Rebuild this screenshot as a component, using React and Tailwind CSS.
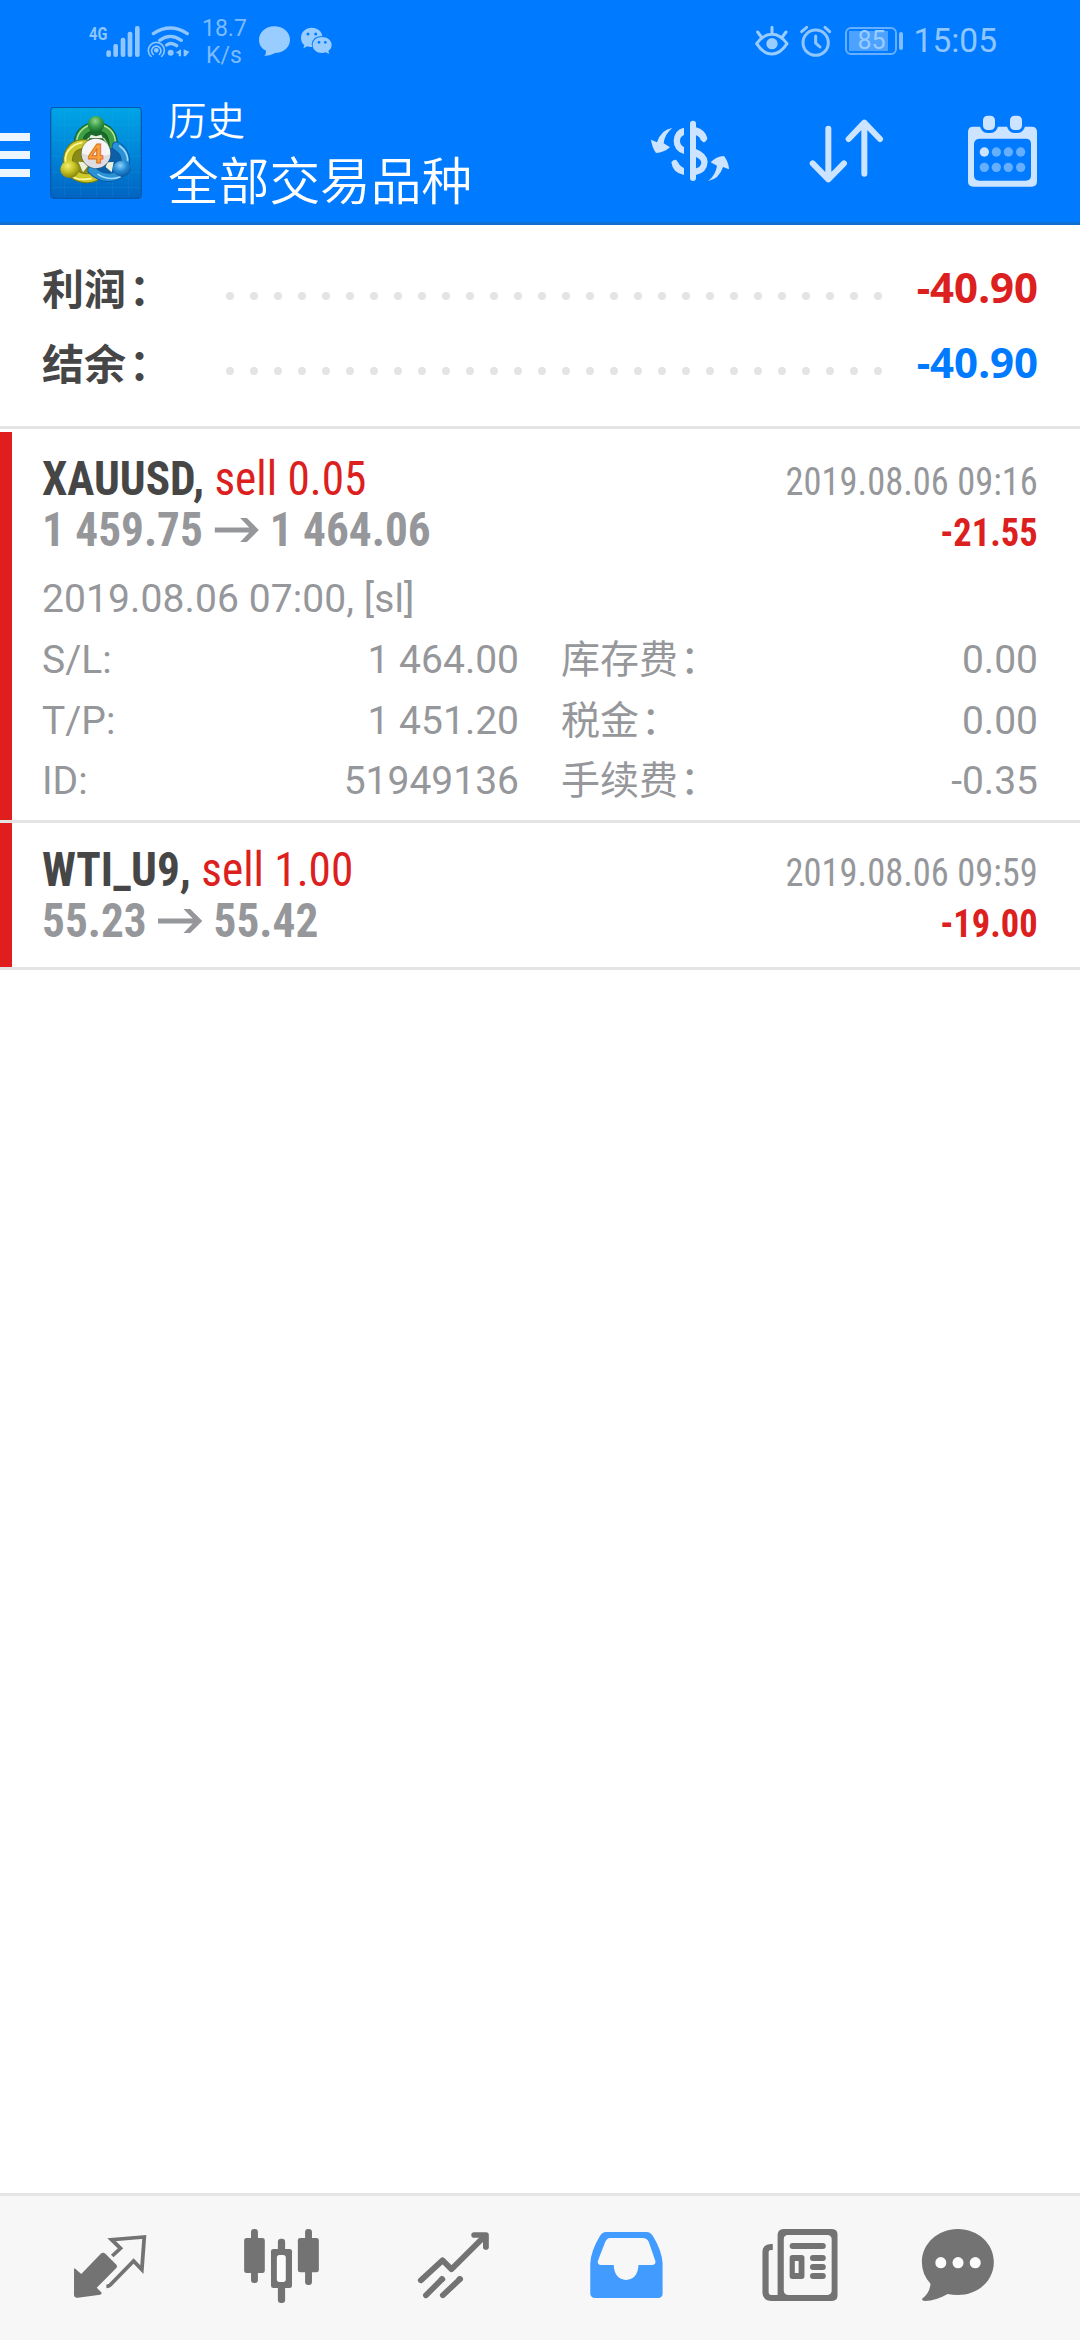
import React from 'react'

const dots = Array.from({ length: 28 })

const SignalIcon = () => (
  <svg className="ml-[27px] h-9 w-[54px] overflow-visible" viewBox="81 64 162 108">
    <text x="87" y="115" fontSize="57" fontWeight="700" fill="#8fc6ff" fontFamily="Roboto" textLength="55" lengthAdjust="spacingAndGlyphs">4G</text>
    <g fill="#8fc6ff">
      <rect x="139" y="146" width="14" height="20" rx="6" />
      <rect x="160" y="127" width="14" height="39" rx="6" />
      <rect x="182" y="108" width="14" height="58" rx="6" />
      <rect x="203" y="90" width="14" height="76" rx="6" />
      <rect x="225" y="73" width="14" height="93" rx="6" />
    </g>
  </svg>
)

const WifiIcon = () => (
  <svg className="ml-[6px] h-8 w-[43px]" viewBox="261 72 129 96">
    <g fill="none" stroke="#8fc6ff" strokeWidth="10" strokeLinecap="round">
      <path d="M280 98Q331 64 382 98" />
      <path d="M299 118Q331 94 364 118" />
      <path d="M320 132Q334 122 350 134" />
      <path d="M273 166A24 24 0 1 1 305 166" strokeWidth="5" />
      <path d="M280 160A14 14 0 1 1 298 160" strokeWidth="5" />
    </g>
    <g fill="#8fc6ff">
      <circle cx="289" cy="148" r="7" />
      <circle cx="332" cy="155" r="9" />
      <path d="M347 155L363 145V166H356V158ZM371 145L388 152L377 166H371Z" />
    </g>
  </svg>
)

const BubbleIcon = () => (
  <svg className="ml-3 h-8 w-[33px]" viewBox="594 75 99 96">
    <path d="M643 79C670 79 690 97 690 119C690 142 670 158 645 159Q634 166 613 168Q619 161 618 152C604 145 597 133 597 119C597 97 617 79 643 79Z" fill="#99ccff" />
  </svg>
)

const WechatIcon = () => (
  <svg className="ml-[9px] h-8 w-[33px]" viewBox="719 75 99 96">
    <path d="M754 83C772 83 785 95 786 108Q757 108 754 133L756 141Q748 142 741 139L729 145L732 135C725 130 722 122 722 113C722 96 736 83 754 83Z" fill="#99ccff" />
    <path d="M785 111C801 111 814 121 814 135C814 143 810 149 804 153L807 162L796 157Q791 159 785 159C769 159 757 149 757 135C757 121 769 111 785 111Z" fill="#99ccff" />
    <g fill="#007aff">
      <circle cx="743" cy="102" r="4.5" />
      <circle cx="766" cy="102" r="4.5" />
      <circle cx="776" cy="127" r="4" />
      <circle cx="795" cy="127" r="4" />
    </g>
  </svg>
)

const EyeIcon = () => (
  <svg className="h-8 w-[36px]" viewBox="68 73 108 96">
    <g fill="none" stroke="#99ccff" strokeWidth="9" strokeLinecap="round" strokeLinejoin="round">
      <path d="M76 129Q96 101 122 101Q147 101 167 129Q147 160 122 160Q96 160 76 129Z" />
      <path d="M122 80V96M79 94L90 109M164 94L153 109" />
    </g>
    <circle cx="122" cy="129" r="17" fill="#99ccff" />
  </svg>
)

const AlarmIcon = () => (
  <svg className="ml-[9px] h-8 w-[34px]" viewBox="202 72 102 96">
    <g fill="none" stroke="#8fc6ff" strokeWidth="9" strokeLinecap="round">
      <circle cx="252" cy="125" r="38" />
      <path d="M252 105V126L265 138M210 92L225 79M294 92L280 79" />
    </g>
  </svg>
)

const StatusBar = () => (
  <div className="flex h-20 items-center pt-px">
    <div className="flex flex-1 items-center pl-[60px]">
      <SignalIcon />
      <WifiIcon />
      <div className="ml-[12px] w-[44px] pt-[2px] text-center text-[23px] leading-[27px] text-[#7dbbff]">
        18.7
        <br />
        K/s
      </div>
      <BubbleIcon />
      <WechatIcon />
    </div>
    <div className="flex items-center pr-[83px]">
      <EyeIcon />
      <AlarmIcon />
      <div className="ml-[12px] flex h-7 w-[52px] items-center rounded-[6px] border-2 border-[#66b0ff] p-[2px]">
        <div className="flex h-5 w-[39px] items-center justify-end bg-[#4da2ff] pr-[2px] text-[25px] leading-none text-[#99ccff]">
          85
        </div>
      </div>
      <div className="ml-[2px] h-[18px] w-1 rounded-full bg-[#80bdff]" />
      <div className="ml-[11px] pt-px text-[33.500px] leading-none text-[#8fc6ff]">15:05</div>
    </div>
  </div>
)

const AppLogo = () => (
  <svg className="ml-5 size-[92px]" viewBox="29 28 276 276">
    <defs>
      <linearGradient id="bg" x1="0" y1="0" x2="0" y2="1">
        <stop offset="0" stopColor="#00a5e6" />
        <stop offset="0.5" stopColor="#0086d8" />
        <stop offset="1" stopColor="#0064c2" />
      </linearGradient>
      <radialGradient id="green" cx="0.45" cy="0.3" r="0.75">
        <stop offset="0" stopColor="#8fd88a" />
        <stop offset="0.5" stopColor="#379a45" />
        <stop offset="1" stopColor="#0e6122" />
      </radialGradient>
      <radialGradient id="yellow" cx="0.4" cy="0.3" r="0.75">
        <stop offset="0" stopColor="#f3ee72" />
        <stop offset="0.5" stopColor="#c5c021" />
        <stop offset="1" stopColor="#7e7d0b" />
      </radialGradient>
      <radialGradient id="blue" cx="0.4" cy="0.3" r="0.75">
        <stop offset="0" stopColor="#8fd4ff" />
        <stop offset="0.5" stopColor="#2389d2" />
        <stop offset="1" stopColor="#07559f" />
      </radialGradient>
    </defs>
    <rect x="31" y="29" width="272" height="273" rx="11" fill="url(#bg)" stroke="#0759ae" strokeWidth="4" />
    <path d="M72 32V300M120 32V300M168 32V300M216 32V300M264 32V300M33 80H301M33 128H301M33 176H301M33 224H301M33 270H301" stroke="#42b8f2" strokeOpacity="0.2" strokeWidth="2" />
    <g strokeLinecap="round">
      <path d="M118 145C108 112 132 84 167 83C204 84 232 112 217 165L167 167Z" fill="#1d6b2c" />
      <path d="M118 145C108 112 132 88 167 87C204 88 226 112 217 165" fill="none" stroke="#0d6326" strokeWidth="28" />
      <path d="M118 145C108 112 132 88 167 87C204 88 226 112 217 165" fill="none" stroke="#3f9f42" strokeWidth="22" />
      <path d="M109 132C110 104 135 80 167 79C202 82 224 103 225 132M145 122L132 140M190 122L202 140" fill="none" stroke="#b9e6a2" strokeWidth="4" />
      <path d="M137 137C90 133 75 176 83 206C94 240 135 249 165 236L167 167Z" fill="#8a8b16" />
      <path d="M134 140C90 137 77 176 85 206C96 238 135 249 165 236" fill="none" stroke="#777b10" strokeWidth="30" />
      <path d="M134 140C90 137 77 176 85 206C96 238 135 249 165 236" fill="none" stroke="#cdc82a" strokeWidth="24" />
      <path d="M124 135C88 142 72 171 76 190M96 236Q115 250 152 243" fill="none" stroke="#fff79c" strokeWidth="5" />
      <path d="M228 145C254 160 262 187 249 215C233 246 184 247 155 217L167 167Z" fill="#0d5fa8" />
      <path d="M228 145C254 160 262 187 249 215C233 246 184 247 155 217" fill="none" stroke="#075ca7" strokeWidth="28" />
      <path d="M228 145C254 160 262 187 249 215C233 246 184 247 155 217" fill="none" stroke="#2b91d5" strokeWidth="22" />
      <path d="M238 145Q262 163 262 188M239 238Q205 250 173 230" fill="none" stroke="#9bdafa" strokeWidth="5" />
    </g>
    <path d="M152 111L167 116L183 111L188 122H146Z" fill="#e6f2df" />
    <circle cx="167" cy="80" r="25" fill="url(#green)" />
    <path d="M114 192L132 194L142 206L128 224ZM201 194L220 193L214 224L196 208Z" fill="#e9f0dc" />
    <ellipse cx="88" cy="215" rx="28" ry="26" fill="url(#yellow)" />
    <ellipse cx="245" cy="213" rx="27" ry="24" fill="url(#blue)" />
    <circle cx="167" cy="167" r="46" fill="#3d4a3a" fillOpacity="0.5" />
    <circle cx="167" cy="166" r="43" fill="#f5f4f6" />
    <path d="M124 167A43 43 0 0 0 210 170Q167 184 124 167Z" fill="#dedde3" />
    <text x="166" y="195" textAnchor="middle" fontFamily="Open Sans" fontSize="79" fontWeight="700" fill="#f9a340" stroke="#dd6f1c" strokeWidth="3">4</text>
  </svg>
)

const CurrencyIcon = () => (
  <svg className="h-[62px] w-[78px]" viewBox="93 90 234 186">
    <g fill="#cce4ff">
      <rect x="210" y="92" width="18" height="181" rx="9" />
      <path d="M157 114Q134 132 131 160L150 172Q132 188 108 189Q96 172 93 149L111 157Q124 118 157 114Z" />
      <path d="M264 273Q287 256 291 227L272 217Q288 199 312 198Q326 216 327 238L309 231Q297 268 264 273Z" />
      <path d="M192 113V135Q180 140 180 152Q180 165 192 171V192Q161 183 161 152Q163 119 192 113Z" />
      <path d="M228 112Q255 119 262 144Q260 156 250 157L242 150Q239 139 228 136Z" />
      <path d="M228 177Q262 190 263 216Q261 248 228 255V235Q243 230 244 218Q243 208 228 201Z" />
      <path d="M192 255Q158 249 154 217Q158 208 168 209L174 217Q180 230 192 234Z" />
    </g>
  </svg>
)

const SortIcon = () => (
  <svg className="ml-20 h-16 w-[75px]" viewBox="566 91 225 192">
    <g fill="none" stroke="#cce4ff" strokeWidth="18" strokeLinecap="round" strokeLinejoin="round">
      <path d="M624 120V272M577 224L624 272L671 224" />
      <path d="M732 255V102M685 151L732 102L779 151" />
    </g>
  </svg>
)

const CalendarIcon = () => (
  <svg className="ml-[84px] h-[72px] w-[69px]" viewBox="1044 76 207 216">
    <path fillRule="evenodd" fill="#cce4ff" d="M1060 111H1235Q1251 111 1251 127V275Q1251 291 1235 291H1060Q1044 291 1044 275V127Q1044 111 1060 111ZM1078 147Q1062 149 1062 163V257Q1062 273 1078 273H1217Q1233 273 1233 257V163Q1233 147 1217 147Z" />
    <g fill="#cce4ff" stroke="#007aff" strokeWidth="9">
      <rect x="1084.500" y="73.500" width="45" height="52" rx="18" />
      <rect x="1165.500" y="73.500" width="45" height="52" rx="18" />
    </g>
    <g fill="#66afff">
      <circle cx="1093" cy="187" r="14" fill="#cce4ff" />
      <circle cx="1129" cy="187" r="14" />
      <circle cx="1165" cy="187" r="14" />
      <circle cx="1202" cy="187" r="14" />
      <circle cx="1093" cy="233" r="14" />
      <circle cx="1129" cy="233" r="14" />
      <circle cx="1165" cy="233" r="14" />
      <circle cx="1202" cy="233" r="14" />
    </g>
  </svg>
)

const Header = () => (
  <header className="h-[225px] border-b-3 border-[#0f6fd2] bg-[#007aff]">
    <StatusBar />
    <div className="flex h-[142px] items-center pr-[43px]">
      <div className="flex w-[30px] flex-col gap-[10px] pt-[8px]">
        <span className="h-2 bg-[#ecf6ff]" />
        <span className="h-2 bg-[#ecf6ff]" />
        <span className="h-2 bg-[#ecf6ff]" />
      </div>
      <div className="flex pt-1">
        <AppLogo />
      </div>
      <div className="ml-[26px] flex-1 font-['Noto_Sans_CJK_SC',sans-serif] font-[350] text-white">
        <div className="text-[38.500px] leading-[54px]">历史</div>
        <div className="text-[50.700px] leading-[66px]">全部交易品种</div>
      </div>
      <div className="flex items-center">
        <CurrencyIcon />
        <SortIcon />
        <CalendarIcon />
      </div>
    </div>
  </header>
)

const SummaryRow = ({ label, value, color }) => (
  <div className="flex h-[75px] items-center justify-between">
    <div className="w-[184px] font-['Noto_Sans_CJK_SC',sans-serif] text-[42px] leading-[75px] font-bold text-[#464646]">
      {label}
      <span className="ml-[3px]">：</span>
    </div>
    <div className="flex w-[656px] justify-between pt-[18px]">
      {dots.map((_, i) => (
        <span key={i} className="size-2 rounded-full bg-[#e4e4e4]" />
      ))}
    </div>
    <div className={`w-[156px] text-right font-['Noto_Sans',sans-serif] text-[42px] leading-[75px] font-bold ${color}`}>{value}</div>
  </div>
)

const Arrow = () => (
  <svg className="mx-[12px] h-6 w-[47px]" viewBox="0 0 46 24" preserveAspectRatio="none">
    <path d="M0 9.500H36L26.500 0H33.500L46 12L33.500 24H26.500L36 14.500H0Z" fill="#96979b" />
  </svg>
)

const Trade = ({ symbol, side, open, close, time, profit, children }) => (
  <div className="border-b-3 border-[#e4e4e4]">
    <div className="border-l-12 border-[#e01e1e] pt-[21px] pr-[42px] pl-[30px]">
      <div className="flex h-[102px] justify-between font-['Roboto_Condensed',Roboto,sans-serif] leading-[51px] [font-stretch:75%]">
        <div className="origin-left scale-x-[0.943] text-[48px]">
          <div className="text-[#dc2020]">
            <span className="font-bold text-[#464646]">{symbol},</span> {side}
          </div>
          <div className="flex items-center font-bold text-[#96979b]">
            {open}
            <Arrow />
            {close}
          </div>
        </div>
        <div className="origin-right scale-x-[0.935] text-right text-[39px]">
          <div className="pt-[5px] leading-[48px] text-[#96979b]">{time}</div>
          <div className="pt-[4px] leading-[47px] font-bold text-[#dc2020]">{profit}</div>
        </div>
      </div>
      {children}
    </div>
  </div>
)

const Detail = ({ label, value, wide }) => (
  <div className="flex justify-between">
    <span>
      {label}
      {wide && <span className="ml-[2px]">：</span>}
    </span>
    <span>{value}</span>
  </div>
)

const History = () => (
  <main className="flex-1">
    <section className="h-[204px] border-b-3 border-[#e4e4e4] px-[42px] pt-[24px]">
      <SummaryRow label="利润" value="-40.90" color="text-[#dc2020]" />
      <SummaryRow label="结余" value="-40.90" color="text-[#007aff]" />
    </section>
    <section className="pt-[3px]">
      <Trade symbol="XAUUSD" side="sell 0.05" open="1 459.75" close="1 464.06" time="2019.08.06 09:16" profit="-21.55">
        <div className="h-[265px] pt-[14px] text-[39px] leading-[60.750px] text-[#96979b]">
          <div className="tracking-[0.1px]">2019.08.06 07:00, [sl]</div>
          <div className="grid grid-cols-2 gap-x-[42px]">
            <Detail label="S/L:" value="1 464.00" />
            <Detail label="库存费" value="0.00" wide />
            <Detail label="T/P:" value="1 451.20" />
            <Detail label="税金" value="0.00" wide />
            <Detail label="ID:" value="51949136" />
            <Detail label="手续费" value="-0.35" wide />
          </div>
        </div>
      </Trade>
      <Trade symbol="WTI_U9" side="sell 1.00" open="55.23" close="55.42" time="2019.08.06 09:59" profit="-19.00">
        <div className="h-[21px]" />
      </Trade>
    </section>
  </main>
)

const tab = 'h-36 w-[172px]'

const TabBar = () => (
  <nav className="flex h-[147px] border-t-3 border-[#e4e4e4] bg-[#f7f7f7] pl-6 text-[#737373]">
    <svg className={tab} viewBox="69.700 48 499.500 432" preserveAspectRatio="none">
      <path d="M217 265L236 282L292 222Q299 215 306 221L338 254Q342 260 337 265L281 323L294 337Q297 342 291 344L226 353Q215 354 215 344V267Z" fill="currentColor" />
      <path d="M326 228L350 205L324 179L419 171L412 269L388 243L320 315Q316 319 309 319" fill="none" stroke="currentColor" strokeWidth="11" />
    </svg>
    <svg className={tab} viewBox="569.200 48 499.500 432" preserveAspectRatio="none">
      <g fill="currentColor">
        <rect x="709" y="174" width="60" height="105" rx="7" />
        <rect x="729" y="147" width="20" height="162" rx="9" />
        <rect x="787" y="207" width="61" height="117" rx="7" />
        <rect x="807" y="176" width="21" height="193" rx="9" />
        <rect x="865" y="174" width="61" height="103" rx="7" />
        <rect x="886" y="147" width="20" height="168" rx="9" />
      </g>
      <rect x="804" y="225" width="26" height="81" rx="8" fill="#fcfcfc" />
    </svg>
    <svg className={tab} viewBox="1068.600 48 499.500 432" preserveAspectRatio="none">
      <g fill="none" stroke="currentColor" strokeWidth="17" strokeLinecap="round">
        <path d="M1222 301L1285 241L1311 268L1408 168" strokeLinejoin="round" />
        <path d="M1377 165H1411V201" strokeLinejoin="round" />
        <path d="M1237 346L1284 297M1286 346L1336 297" />
        <path d="M1280 301L1288 293M1331 301L1339 293" strokeLinecap="butt" />
      </g>
    </svg>
    <svg className={tab} viewBox="0 48 499.500 432" preserveAspectRatio="none">
      <path fillRule="evenodd" fill="#429cff" d="M192 156H310Q320 156 328 168Q354 212 356 250V341Q356 353 343 354H160Q147 353 146 341V250Q148 212 174 168Q181 156 192 156ZM204 174Q194 174 189 187L168 243Q166 254 177 255H214Q216 297 250 300Q284 297 286 255H326Q337 254 335 243L316 186Q311 174 298 174Z" />
    </svg>
    <svg className={tab} viewBox="499.500 48 499.500 432" preserveAspectRatio="none">
      <path fillRule="evenodd" fill="currentColor" d="M707 147H848Q864 148 864 164V346Q864 363 848 363H690V164Q691 148 707 147ZM720 165Q708 166 708 177V333Q709 344 720 345H835Q846 344 847 333V177Q846 166 835 165Z" />
      <path d="M676 201H670Q655 202 655 216V338Q656 354 672 354H692" fill="none" stroke="currentColor" strokeWidth="18" />
      <rect x="725" y="189" width="105" height="18" rx="9" fill="currentColor" />
      <path fillRule="evenodd" fill="currentColor" d="M733 225H760Q768 225 768 233V289Q768 297 760 297H733Q725 297 725 289V233Q725 225 733 225ZM740 243V279H751V243Z" />
      <rect x="784" y="225" width="46" height="18" rx="9" fill="currentColor" />
      <rect x="784" y="252" width="46" height="18" rx="9" fill="currentColor" />
      <rect x="784" y="279" width="46" height="18" rx="9" fill="currentColor" />
    </svg>
    <svg className={tab} viewBox="999 48 499.500 432" preserveAspectRatio="none">
      <path fill="currentColor" d="M1213 147C1273 147 1318 192 1318 246C1318 302 1273 345 1213 345Q1198 345 1184 342Q1150 362 1118 363Q1105 361 1112 354Q1132 338 1134 311Q1109 283 1109 246C1109 192 1155 147 1213 147Z" />
      <g fill="#fcfcfc">
        <ellipse cx="1164" cy="248" rx="16" ry="17" />
        <ellipse cx="1214" cy="248" rx="16" ry="17" />
        <ellipse cx="1264" cy="248" rx="16" ry="17" />
      </g>
    </svg>
  </nav>
)

const App = () => {
  return (
    <div className="flex h-[2340px] w-[1080px] flex-col overflow-hidden bg-white font-[Roboto,'Noto_Sans_CJK_SC',sans-serif]">
      <Header />
      <History />
      <TabBar />
    </div>
  )
}

export default App
